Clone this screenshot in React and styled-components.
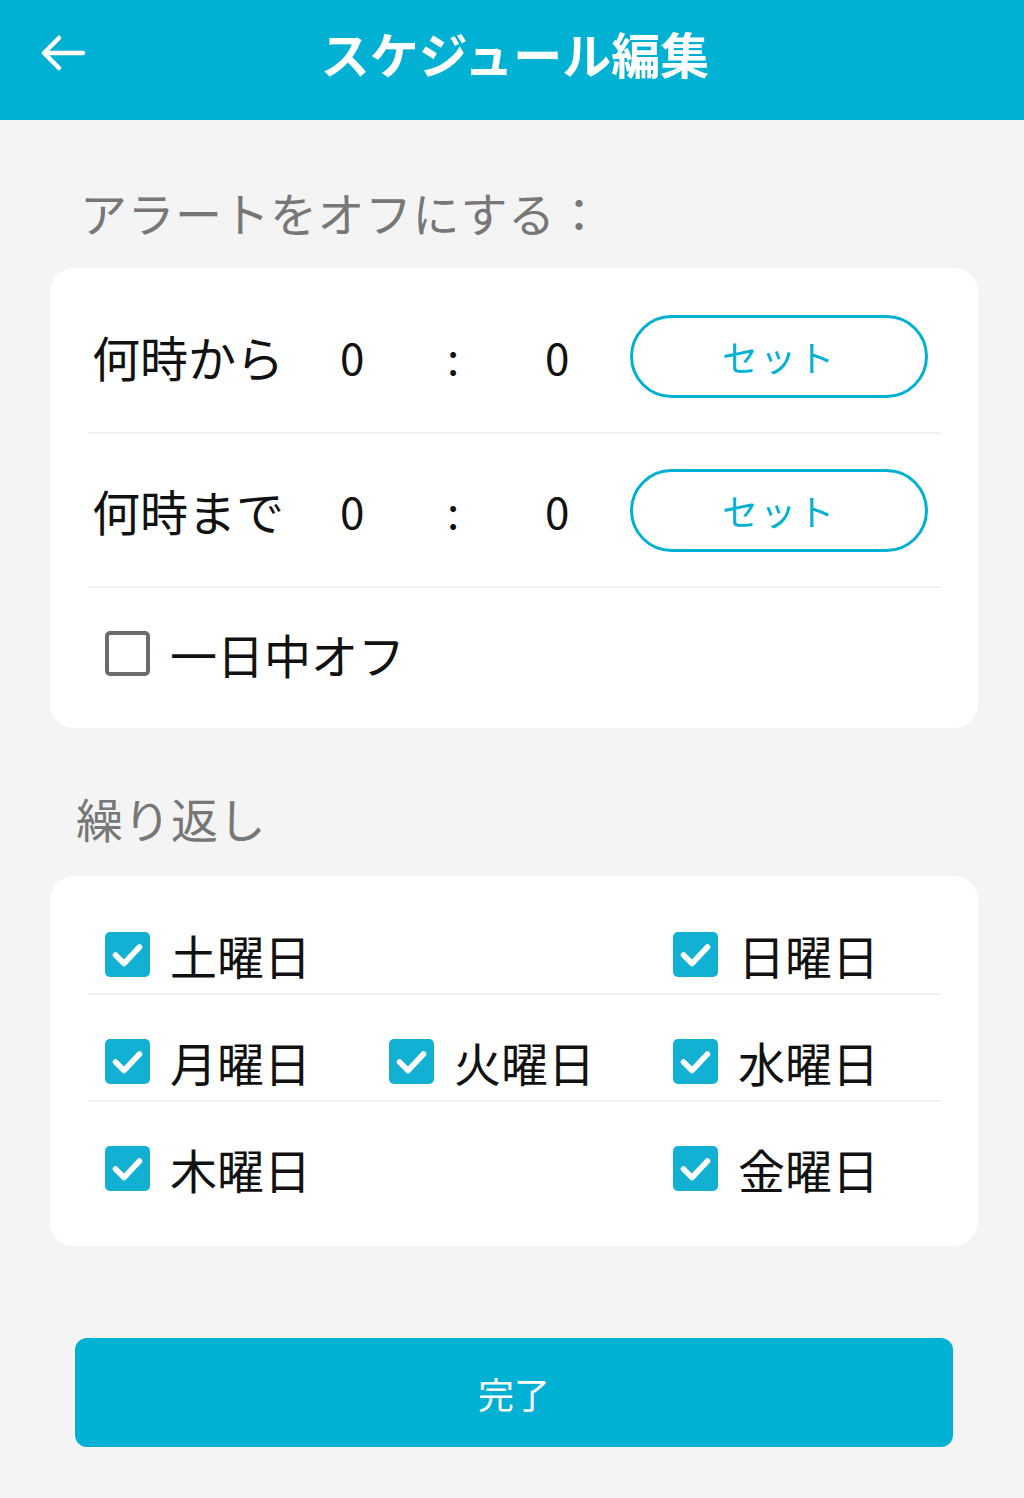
import React from "react";
import styled, { createGlobalStyle } from "styled-components";

const Global = createGlobalStyle`
  html, body { margin: 0; padding: 0; background: #f4f4f4; }
  body { font-family: "Noto Sans CJK JP", "Noto Sans", sans-serif; }
  #root { min-height: 1498px; background: #f4f4f4; }
`;

const BLUE = "#00b1d3";

const Header = styled.header`
  height: 120px;
  background: ${BLUE};
  display: flex;
  align-items: center;
  position: relative;
  padding-bottom: 14px;
  box-sizing: border-box;
`;

const BackButton = styled.button`
  position: absolute;
  left: 38px;
  top: 30px;
  width: 50px;
  height: 46px;
  background: none;
  border: none;
  padding: 0;
  display: flex;
  align-items: center;
  justify-content: center;
  cursor: pointer;
`;

const Title = styled.h1`
  flex: 1;
  margin: 0;
  text-align: center;
  color: #fff;
  font-size: 49px;
  font-weight: 700;
  line-height: 60px;
  padding-left: 6px;
`;

const Content = styled.main`
  padding: 0 46px 0 50px;
  display: flex;
  flex-direction: column;
`;

const SectionLabel = styled.div`
  margin: ${(p) => p.$top}px 0 ${(p) => p.$bottom}px ${(p) => p.$left}px;
  height: 60px;
  line-height: 60px;
  font-size: 47px;
  color: #777;
  letter-spacing: 0.5px;
`;

const Card = styled.section`
  background: #fff;
  border-radius: 24px;
  padding: ${(p) => p.$pad};
  display: flex;
  flex-direction: column;
`;

const TimeRow = styled.div`
  height: 152px;
  display: flex;
  align-items: center;
  border-bottom: 2px solid #f1f1f1;
  padding-left: 4px;
`;

const TimeLabel = styled.span`
  width: 248px;
  font-size: 48px;
  color: #111;
`;

const Num = styled.span`
  width: ${(p) => p.$w}px;
  font-size: 44px;
  color: #111;
`;

const Colon = styled.span`
  width: ${(p) => p.$w}px;
  font-size: 44px;
  color: #111;
`;

const SetButton = styled.button`
  width: 298px;
  height: 83px;
  border: 3px solid ${BLUE};
  border-radius: 42px;
  background: #fff;
  color: ${BLUE};
  font-family: inherit;
  font-size: 36px;
  letter-spacing: 2px;
  padding: 0;
  cursor: pointer;
`;

const AllDayRow = styled.div`
  height: 130px;
  display: flex;
  align-items: center;
  padding: 0 0 10px 17px;
  gap: 20px;
`;

const Box = styled.span`
  width: 45px;
  height: 45px;
  box-sizing: border-box;
  border-radius: 5px;
  flex: none;
  display: flex;
  align-items: center;
  justify-content: center;
  background: ${(p) => (p.$checked ? "#12b0d3" : "#fff")};
  border: ${(p) => (p.$checked ? "none" : "4px solid #6b6b6b")};
`;

const CheckText = styled.span`
  font-size: 47px;
  color: #111;
  line-height: 1;
`;

const DayRow = styled.div`
  height: 105px;
  display: grid;
  grid-template-columns: repeat(3, 284px);
  align-items: center;
  border-bottom: ${(p) => (p.$last ? "none" : "2px solid #f1f1f1")};
  & > * { margin-top: 28px; }
`;

const DayItem = styled.label`
  display: flex;
  align-items: center;
  gap: 20px;
  padding-left: 17px;
  grid-column: ${(p) => p.$col};
`;

const DoneButton = styled.button`
  margin: 92px 25px 0;
  height: 109px;
  border: none;
  border-radius: 12px;
  background: ${BLUE};
  color: #fff;
  font-family: inherit;
  font-size: 36px;
  cursor: pointer;
`;

const Check = ({ checked }) => (
  <Box $checked={checked}>
    {checked && (
      <svg width="45" height="45" viewBox="0 0 45 45">
        <path d="M10.5 23 L19 31.5 L34.5 15" fill="none" stroke="#fff" strokeWidth="5.5" strokeLinecap="round" strokeLinejoin="round" />
      </svg>
    )}
  </Box>
);

const Day = ({ label, col }) => (
  <DayItem $col={col}>
    <Check checked />
    <CheckText>{label}</CheckText>
  </DayItem>
);

const TimeLine = ({ label }) => (
  <TimeRow>
    <TimeLabel>{label}</TimeLabel>
    <Num $w={107}>0</Num>
    <Colon $w={98}>:</Colon>
    <Num $w={85}>0</Num>
    <SetButton>セット</SetButton>
  </TimeRow>
);

export default function App() {
  return (
    <>
      <Global />
      <Header>
        <BackButton aria-label="back">
          <svg width="48" height="40" viewBox="0 0 48 40">
            <path d="M44 20 H6 M20 5 L5 20 L20 35" fill="none" stroke="#fff" strokeWidth="4.5" strokeLinecap="round" strokeLinejoin="round" />
          </svg>
        </BackButton>
        <Title>スケジュール編集</Title>
      </Header>
      <Content>
        <SectionLabel $top={62} $bottom={26} $left={30}>アラートをオフにする：</SectionLabel>
        <Card $pad="12px 38px 0">
          <TimeLine label="何時から" />
          <TimeLine label="何時まで" />
          <AllDayRow>
            <Check checked={false} />
            <CheckText>一日中オフ</CheckText>
          </AllDayRow>
        </Card>
        <SectionLabel $top={60} $bottom={28} $left={26}>繰り返し</SectionLabel>
        <Card $pad="12px 38px 39px">
          <DayRow>
            <Day label="土曜日" col={1} />
            <Day label="日曜日" col={3} />
          </DayRow>
          <DayRow>
            <Day label="月曜日" col={1} />
            <Day label="火曜日" col={2} />
            <Day label="水曜日" col={3} />
          </DayRow>
          <DayRow $last>
            <Day label="木曜日" col={1} />
            <Day label="金曜日" col={3} />
          </DayRow>
        </Card>
        <DoneButton>完了</DoneButton>
      </Content>
    </>
  );
}
